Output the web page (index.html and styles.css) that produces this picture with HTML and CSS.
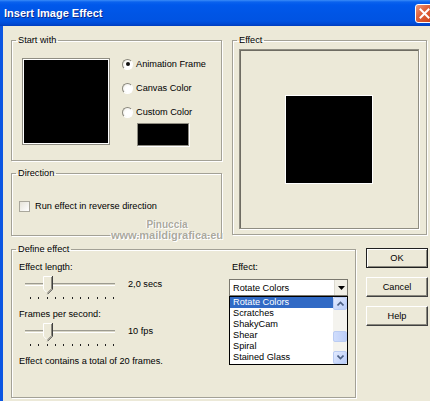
FILE: index.html
```html
<!DOCTYPE html>
<html>
<head>
<meta charset="utf-8">
<link rel="stylesheet" href="styles.css">
</head>
<body>
<div class="window">
  <div class="titlebar">
    <span class="title">Insert Image Effect</span>
    <span class="close"><svg width="17" height="17" viewBox="0 0 17 17"><path d="M4.5 4.5 L12.5 12.5 M12.5 4.5 L4.5 12.5" stroke="#fff" stroke-width="2" stroke-linecap="square"/></svg></span>
  </div>
  <div class="client">
    <div class="toprow">
      <div class="leftcol">
        <fieldset class="group start">
          <legend>Start with</legend>
          <div class="start-inner">
            <div class="thumbbox"></div>
            <div class="radios">
              <div class="radio"><span class="rb checked"></span><span>Animation Frame</span></div>
              <div class="radio"><span class="rb"></span><span>Canvas Color</span></div>
              <div class="radio"><span class="rb"></span><span>Custom Color</span></div>
              <div class="swatch"></div>
            </div>
          </div>
        </fieldset>
        <fieldset class="group direction">
          <legend>Direction</legend>
          <div class="direction-inner">
            <div class="check"><span class="cb"></span><span>Run effect in reverse direction</span></div>
          </div>
        </fieldset>
      </div>
      <fieldset class="group effect">
        <legend>Effect</legend>
        <div class="effect-inner">
          <div class="frame"><div class="square"></div></div>
        </div>
      </fieldset>
    </div>
    <div class="bottomrow">
      <fieldset class="group define">
        <legend>Define effect</legend>
        <div class="define-inner">
          <div class="params">
            <div class="line">Effect length:</div>
            <div class="slider-row">
              <svg class="slider" width="96" height="26" viewBox="0 0 96 26">
                <rect x="3" y="9" width="90" height="1" fill="#9d9b90"/>
                <rect x="3" y="10" width="90" height="1" fill="#d8d5c6"/>
                <rect x="3" y="11" width="90" height="1" fill="#ffffff"/>
                <polygon points="21,2 30,2 30,15 25.5,19.5 21,15" fill="#ECE9D8"/>
                <path d="M21.5 15 V2.5 H29.5" stroke="#fff" fill="none"/>
                <path d="M30.5 2 V15.2 L25.5 20.2" stroke="#404040" fill="none"/>
                <path d="M29.5 3 V14.8 L25.5 18.8" stroke="#8a887e" fill="none"/>
                <path d="M21.5 15.2 L24.5 18.2" stroke="#fff" fill="none"/>
                <g fill="#202020">
                  <rect x="8" y="23" width="1" height="2"/><rect x="16" y="23" width="1" height="2"/><rect x="25" y="23" width="1" height="2"/><rect x="33" y="23" width="1" height="2"/><rect x="41" y="23" width="1" height="2"/><rect x="50" y="23" width="1" height="2"/><rect x="58" y="23" width="1" height="2"/><rect x="66" y="23" width="1" height="2"/><rect x="75" y="23" width="1" height="2"/><rect x="83" y="23" width="1" height="2"/><rect x="91" y="23" width="1" height="2"/>
                </g>
              </svg>
              <span class="value">2,0 secs</span>
            </div>
            <div class="line gap">Frames per second:</div>
            <div class="slider-row">
              <svg class="slider" width="96" height="26" viewBox="0 0 96 26">
                <rect x="3" y="9" width="90" height="1" fill="#9d9b90"/>
                <rect x="3" y="10" width="90" height="1" fill="#d8d5c6"/>
                <rect x="3" y="11" width="90" height="1" fill="#ffffff"/>
                <polygon points="21,2 30,2 30,15 25.5,19.5 21,15" fill="#ECE9D8"/>
                <path d="M21.5 15 V2.5 H29.5" stroke="#fff" fill="none"/>
                <path d="M30.5 2 V15.2 L25.5 20.2" stroke="#404040" fill="none"/>
                <path d="M29.5 3 V14.8 L25.5 18.8" stroke="#8a887e" fill="none"/>
                <path d="M21.5 15.2 L24.5 18.2" stroke="#fff" fill="none"/>
                <g fill="#202020">
                  <rect x="8" y="23" width="1" height="2"/><rect x="16" y="23" width="1" height="2"/><rect x="25" y="23" width="1" height="2"/><rect x="33" y="23" width="1" height="2"/><rect x="41" y="23" width="1" height="2"/><rect x="50" y="23" width="1" height="2"/><rect x="58" y="23" width="1" height="2"/><rect x="66" y="23" width="1" height="2"/><rect x="75" y="23" width="1" height="2"/><rect x="83" y="23" width="1" height="2"/><rect x="91" y="23" width="1" height="2"/>
                </g>
              </svg>
              <span class="value">10 fps</span>
            </div>
            <div class="line gap">Effect contains a total of 20 frames.</div>
          </div>
          <div class="picker">
            <div class="line picker-label">Effect:</div>
            <div class="combo">
              <span class="combo-text">Rotate Colors</span>
              <span class="combo-btn"><svg width="7" height="4" viewBox="0 0 7 4"><path d="M0 0 H7 L3.5 4 Z" fill="#000"/></svg></span>
            </div>
            <div class="list">
              <div class="items">
                <div class="item selected">Rotate Colors</div>
                <div class="item">Scratches</div>
                <div class="item">ShakyCam</div>
                <div class="item">Shear</div>
                <div class="item">Spiral</div>
                <div class="item">Stained Glass</div>
              </div>
              <div class="scrollbar">
                <div class="sb-btn"><svg width="7" height="5" viewBox="0 0 7 5"><path d="M0.5 4.5 L3.5 1.5 L6.5 4.5" stroke="#4d6185" stroke-width="1.6" fill="none"/></svg></div>
                <div class="sb-track"><div class="sb-thumb"></div></div>
                <div class="sb-btn"><svg width="7" height="5" viewBox="0 0 7 5"><path d="M0.5 0.5 L3.5 3.5 L6.5 0.5" stroke="#4d6185" stroke-width="1.6" fill="none"/></svg></div>
              </div>
            </div>
          </div>
        </div>
      </fieldset>
      <div class="buttons">
        <div class="btn default">OK</div>
        <div class="btn">Cancel</div>
        <div class="btn">Help</div>
      </div>
    </div>
  </div>
  <div class="watermark">
    <div class="wm1">Pinuccia</div>
    <div class="wm2">www.maildigrafica.eu</div>
  </div>
</div>
</body>
</html>
```

FILE: styles.css
```css
* { box-sizing: border-box; }
html, body { margin: 0; padding: 0; }
body {
  width: 430px;
  height: 401px;
  overflow: hidden;
  background: #ECE9D8;
  font-family: "Liberation Sans", Arial, sans-serif;
  font-size: 9.2px;
  color: #000;
}
.window {
  position: relative;
  height: 401px;
  border-left: 3px solid #0B56E2;
  background: #ECE9D8;
}
.titlebar {
  height: 26px;
  margin-left: -3px;
  padding-left: 4px;
  display: flex;
  align-items: center;
  justify-content: space-between;
  background: linear-gradient(#3A8CF8 0, #0A62EE 2px, #0058EB 5px, #0055E5 14px, #0053E2 21px, #0049D3 24px, #003DBD 26px);
}
.title {
  color: #fff;
  font-weight: bold;
  font-size: 11px;
  line-height: 14px;
  text-shadow: 1px 1px 0 #0A2B8F;
}
.close {
  width: 19px;
  height: 19px;
  margin-right: -4px;
  border: 1px solid #fff;
  border-radius: 3px;
  background: linear-gradient(135deg, #EE9A7E 0%, #E0623C 40%, #CC4317 100%);
  display: flex;
  align-items: center;
  justify-content: center;
}
.client {
  padding: 9px 0 0 8px;
}
.toprow {
  display: flex;
  gap: 10px;
}
.leftcol {
  width: 211px;
  display: flex;
  flex-direction: column;
  gap: 7px;
}
.group {
  margin: 0;
  padding: 0;
  min-width: 0;
  border: 1px solid #A3A196;
  box-shadow: inset 1px 1px 0 #fff, 1px 1px 0 #fff;
}
.group legend {
  padding: 0 2px;
  margin-left: 4px;
  height: 11px;
  line-height: 11px;
}
.start { height: 126px; }
.start-inner {
  display: flex;
  padding: 12px 0 0 10px;
}
.thumbbox {
  width: 88px;
  height: 87px;
  background: #000;
  border: 1px solid #8F8D82;
  box-shadow: inset 1px 1px 0 #fff, inset -1px -1px 0 #fff;
}
.radios {
  margin-left: 12px;
  display: flex;
  flex-direction: column;
  gap: 12px;
}
.radio {
  height: 12px;
  display: flex;
  align-items: center;
  gap: 3px;
}
.rb {
  width: 11px;
  height: 11px;
  border-radius: 50%;
  border: 1px solid;
  border-color: #8a887e #ffffff #ffffff #8a887e;
  background: radial-gradient(circle at 60% 60%, #ffffff 40%, #e8e6dc 100%);
  display: flex;
  align-items: center;
  justify-content: center;
}
.rb.checked::after {
  content: "";
  width: 4px;
  height: 4px;
  border-radius: 50%;
  background: #111;
}
.swatch {
  margin: -7px 0 0 15px;
  width: 52px;
  height: 23px;
  background: #000;
  border: 1px solid #8F8D82;
  box-shadow: 1px 1px 0 #fff;
}
.direction { height: 68px; }
.direction-inner {
  padding: 21px 0 0 7px;
}
.check {
  height: 12px;
  display: flex;
  align-items: center;
  gap: 5px;
}
.cb {
  width: 11px;
  height: 11px;
  border: 1px solid #A9A79C;
  background: linear-gradient(135deg, #E6E4DA, #ffffff);
}
.effect {
  width: 195px;
  height: 200px;
}
.effect-inner {
  padding: 3px 0 0 6px;
}
.frame {
  width: 180px;
  height: 180px;
  border: 1px solid #8F8D82;
  box-shadow: inset 1px 1px 0 #6E6C62, 1px 1px 0 #fff;
  display: flex;
  align-items: center;
  justify-content: center;
}
.square {
  width: 88px;
  height: 89px;
  background: #000;
  border: 1px solid #fff;
}
.bottomrow {
  margin-top: 8px;
  display: flex;
  gap: 10px;
}
.define {
  width: 345px;
  height: 154px;
}
.define-inner {
  display: flex;
}
.params {
  width: 217px;
  padding: 6px 0 0 7px;
}
.line {
  height: 12px;
  line-height: 12px;
  white-space: nowrap;
}
.line.gap { margin-top: 8px; }
.slider-row {
  margin-top: 1px;
  display: flex;
  align-items: flex-start;
}
.slider {
  display: block;
  margin-left: 3px;
}
.value {
  margin: 4px 0 0 10px;
  line-height: 12px;
}
.picker {
  padding-top: 6px;
  width: 119px;
}
.picker-label { padding-left: 3px; }
.combo {
  margin-top: 6px;
  height: 17px;
  border: 1px solid #7A786E;
  background: #fff;
  display: flex;
  align-items: center;
  justify-content: space-between;
}
.combo-text { padding-left: 3px; }
.combo-btn {
  width: 13px;
  height: 15px;
  background: #F1EFE6;
  border-left: 1px solid #DCDAD0;
  display: flex;
  align-items: center;
  justify-content: center;
}
.list {
  height: 69px;
  border: 1px solid #000;
  background: #fff;
  display: flex;
}
.items {
  flex: 1;
  padding-top: 0;
}
.item {
  height: 11px;
  line-height: 11px;
  padding-left: 3px;
  white-space: nowrap;
}
.item.selected {
  background: #316AC5;
  color: #fff;
}
.scrollbar {
  width: 14px;
  display: flex;
  flex-direction: column;
  background: #F4F3EE;
}
.sb-btn {
  height: 13px;
  border: 1px solid #BACCF3;
  border-radius: 2px;
  background: linear-gradient(135deg, #E2EAFE, #B9CCF8);
  display: flex;
  align-items: center;
  justify-content: center;
}
.sb-track {
  flex: 1;
  padding-top: 21px;
}
.sb-thumb {
  height: 11px;
  border: 1px solid #BACCF3;
  border-radius: 2px;
  background: linear-gradient(90deg, #D0DDFC, #BCCEF8);
}
.buttons {
  margin-top: 4px;
  width: 62px;
  display: flex;
  flex-direction: column;
  gap: 9px;
}
.btn {
  height: 20px;
  line-height: 18px;
  text-align: center;
  border: 1px solid;
  border-color: #ffffff #404040 #404040 #ffffff;
  box-shadow: inset -1px -1px 0 #8a887e;
  background: #ECE9D8;
}
.btn.default {
  border: 1px solid #202020;
  box-shadow: inset 1px 1px 0 #fff, inset -1px -1px 0 #8a887e;
}
.watermark {
  position: absolute;
  left: 104px;
  top: 220px;
  width: 120px;
  text-align: center;
  font-weight: bold;
  color: #ABA99D;
  text-shadow: 1px 1px 0 #fff, -1px 0 0 #fff;
  line-height: 10px;
}
.wm1 { font-size: 10px; }
.wm2 { font-size: 11px; letter-spacing: 0; }
```
